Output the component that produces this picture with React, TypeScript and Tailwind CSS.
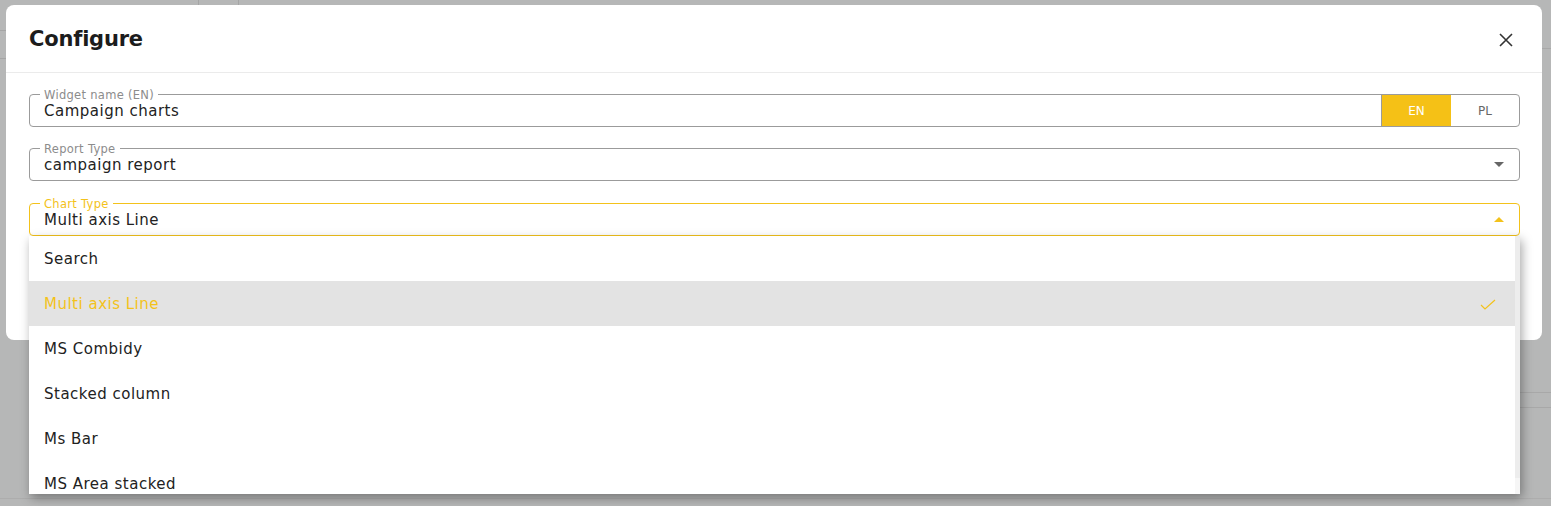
import React from 'react';

const font = { fontFamily: "'DejaVu Sans', 'Liberation Sans', sans-serif" };

const options = ['Multi axis Line', 'MS Combidy', 'Stacked column', 'Ms Bar', 'MS Area stacked'];

const Field = ({ label, value, active, children }: { label: string; value: string; active?: boolean; children?: React.ReactNode }) => (
    <div className={`relative flex h-[33px] items-center rounded-[4px] border ${active ? 'border-[#f3c21b]' : 'border-[#9b9b9b]'}`}>
        <span className={`absolute left-[10px] top-[-7px] bg-white px-[4px] text-[11.5px] leading-[14px] tracking-[0.3px] ${active ? 'text-[#f3c21b]' : 'text-[#8c8c8c]'}`}>{label}</span>
        <span className="flex-1 pl-[14px] pt-[1px] text-[15px] tracking-[0.5px] text-[#222]">{value}</span>
        {children}
    </div>
);

const App = () => {
    return (
        <div style={font} className="relative h-[506px] w-full overflow-hidden bg-[#b6b7b7]">
            {/* faint page behind the overlay */}
            <div className="absolute left-0 top-[30px] h-px w-[6px] bg-[#a5a5a5]" />
            <div className="absolute left-0 top-[58px] h-px w-[6px] bg-[#a5a5a5]" />
            <div className="absolute left-[198px] top-0 h-[5px] w-px bg-[#a5a5a5]" />
            <div className="absolute left-[238px] top-0 h-[5px] w-px bg-[#a5a5a5]" />
            <div className="absolute right-0 top-[48px] h-px w-[9px] bg-[#a8a8a8]" />
            <div className="absolute right-0 top-[392px] h-px w-[31px] bg-[#a8a8a8]" />
            <div className="absolute right-0 top-[407px] h-px w-[31px] bg-[#a8a8a8]" />
            <div className="absolute bottom-[7px] left-[0px] h-px w-full bg-[#adadad]" />

            <div className="relative ml-[6px] mr-[9px] mt-[5px] h-[335px] rounded-[8px] bg-white">
                <div className="flex h-[68px] items-center justify-between border-b border-[#ebebeb] pl-[23px] pr-[29px] pt-[2px]">
                    <h1 className="text-[21px] font-bold tracking-[-0.2px] text-[#1c1c1c]">Configure</h1>
                    <svg width="14" height="14" viewBox="0 0 14 14" className="text-[#333]">
                        <path d="M1 1L13 13M13 1L1 13" stroke="currentColor" strokeWidth="1.6" />
                    </svg>
                </div>
                <div className="flex flex-col gap-[21px] pl-[23px] pr-[22px] pt-[21px]">
                    <Field label="Widget name (EN)" value="Campaign charts">
                        <div className="flex h-full text-[12px]">
                            <div className="flex w-[70px] items-center justify-center border-l border-[#9b9b9b] bg-[#f5c116] text-white">EN</div>
                            <div className="flex w-[68px] items-center justify-center text-[#666]">PL</div>
                        </div>
                    </Field>
                    <Field label="Report Type" value="campaign report">
                        <svg width="10" height="5" viewBox="0 0 10 5" className="mr-[15px]">
                            <path d="M0 0H10L5 5Z" fill="#666" />
                        </svg>
                    </Field>
                    <div className="relative mt-[1px]">
                        <Field label="Chart Type" value="Multi axis Line" active>
                            <svg width="10" height="5" viewBox="0 0 10 5" className="mr-[15px]">
                                <path d="M0 5H10L5 0Z" fill="#f3c21b" />
                            </svg>
                        </Field>
                        <div className="absolute left-0 right-0 top-[33px] z-10 flex h-[258px] overflow-hidden bg-white shadow-[2px_4px_10px_rgba(0,0,0,0.35)]">
                            <div className="flex-1 text-[15px] tracking-[0.5px] text-[#222]">
                                <div className="flex h-[45px] items-center pl-[15px] pt-[2px]">Search</div>
                                {options.map((o, i) => (
                                    <div key={o} className={`flex h-[45px] shrink-0 items-center justify-between pl-[15px] pr-[19px] pt-[2px] ${i === 0 ? 'bg-[#e3e3e3] text-[#f3c21b]' : ''}`}>
                                        <span>{o}</span>
                                        {i === 0 && (
                                            <svg width="16" height="12" viewBox="0 0 16 12">
                                                <path d="M1 6L5 10L15 1" fill="none" stroke="#f3c21b" strokeWidth="1.2" />
                                            </svg>
                                        )}
                                    </div>
                                ))}
                            </div>
                            <div className="flex w-[5px] flex-col bg-[#ededed]">
                                <div className="flex-1" />
                                <div className="h-[16px] bg-[#f6f6f6]" />
                            </div>
                        </div>
                    </div>
                </div>
            </div>
        </div>
    );
};

export default App;
